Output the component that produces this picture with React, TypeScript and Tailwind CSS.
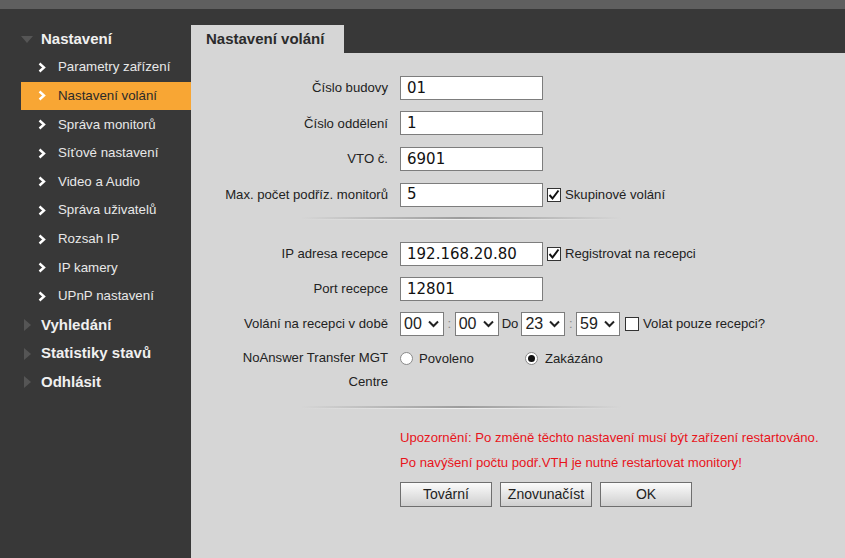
import React from 'react';

const font = { fontFamily: '"Liberation Sans", Arial, sans-serif' };

function Chevron() {
  return (
    <svg width="8" height="11" viewBox="0 0 8 11" className="shrink-0">
      <polyline points="1.5,1.5 6,5.5 1.5,9.5" fill="none" stroke="#ffffff" strokeWidth="2.4" />
    </svg>
  );
}

function Tri({ down }: { down?: boolean }) {
  return down ? (
    <svg width="12" height="9" viewBox="0 0 12 9" className="shrink-0">
      <polygon points="0,1 12,1 6,8" fill="#555555" />
    </svg>
  ) : (
    <svg width="12" height="12" viewBox="0 0 12 12" className="shrink-0">
      <polygon points="2,0 9,6 2,12" fill="#555555" />
    </svg>
  );
}

const items = [
  'Parametry zařízení',
  'Nastavení volání',
  'Správa monitorů',
  'Síťové nastavení',
  'Video a Audio',
  'Správa uživatelů',
  'Rozsah IP',
  'IP kamery',
  'UPnP nastavení',
];

function Sidebar() {
  return (
    <aside className="w-[191px] shrink-0 pt-[16px]">
      <div className="h-[28px] flex items-center pl-[21px] gap-[8px]">
        <Tri down />
        <span className="text-[15px] font-bold text-[#f0f0f0]">Nastavení</span>
      </div>
      {items.map((it) => {
        const active = it === 'Nastavení volání';
        return (
          <div
            key={it}
            className={`h-[28.625px] ml-[21px] flex items-center pl-[17px] gap-[12px] ${
              active ? 'bg-[#f8a634]' : ''
            }`}
          >
            <Chevron />
            <span className={`text-[13.3px] ${active ? 'text-[#2a2a2a]' : 'text-[#e8e8e8]'}`}>{it}</span>
          </div>
        );
      })}
      {['Vyhledání', 'Statistiky stavů', 'Odhlásit'].map((h) => (
        <div key={h} className="h-[28.625px] flex items-center pl-[22px] gap-[7px]">
          <Tri />
          <span className="text-[15px] font-bold text-[#f0f0f0]">{h}</span>
        </div>
      ))}
    </aside>
  );
}

function TextBox({ value }: { value: string }) {
  return (
    <div
      className="w-[143px] h-[24px] bg-white border border-[#7d7d7d] flex items-center pl-[6px] text-[15px] text-[#111]"
      style={{ fontFamily: '"DejaVu Sans", Verdana, sans-serif' }}
    >
      {value}
    </div>
  );
}

function Check({ checked }: { checked?: boolean }) {
  return (
    <div className="w-[14px] h-[14px] bg-white border border-[#333] flex items-center justify-center shrink-0">
      {checked && (
        <svg width="12" height="12" viewBox="0 0 12 12">
          <polyline points="1.5,6 4.5,9.5 10.5,1.5" fill="none" stroke="#111" strokeWidth="2" />
        </svg>
      )}
    </div>
  );
}

function Radio({ checked }: { checked?: boolean }) {
  return (
    <div className="w-[13px] h-[13px] rounded-full bg-white border border-[#8a8a8a] flex items-center justify-center shrink-0">
      {checked && <div className="w-[7px] h-[7px] rounded-full bg-[#111]" />}
    </div>
  );
}

function Sel({ value }: { value: string }) {
  return (
    <div className="w-[44px] h-[24px] bg-white border border-[#7d7d7d] flex items-center justify-between pl-[3px] pr-[4px] text-[16px] text-[#222]">
      <span>{value}</span>
      <svg width="11" height="8" viewBox="0 0 11 8">
        <polyline points="1,1.5 5.5,6 10,1.5" fill="none" stroke="#222" strokeWidth="2" />
      </svg>
    </div>
  );
}

function Row({ label, children, h = 'h-[35.6px]' }: { label: React.ReactNode; children?: React.ReactNode; h?: string }) {
  return (
    <div className={`${h} flex items-center`}>
      <div className="w-[167px] ml-[30px] text-right text-[13.15px] text-[#222]">{label}</div>
      <div className="ml-[12px] flex items-center">{children}</div>
    </div>
  );
}

function Separator() {
  return (
    <div className="ml-[110px] w-[320px]">
      <div className="h-[2px] bg-gradient-to-r from-transparent via-[#9c9c9c] to-transparent" />
      <div className="h-[1px] bg-gradient-to-r from-transparent via-[#eeeeee] to-transparent" />
    </div>
  );
}

function Btn({ children }: { children: React.ReactNode }) {
  return (
    <div className="w-[92px] h-[25px] border border-[#6f6f6f] bg-gradient-to-b from-[#fbfbfb] to-[#cfcfcf] flex items-center justify-center text-[14px] text-[#222]">
      {children}
    </div>
  );
}

export default function App() {
  return (
    <div className="w-[845px] h-[558px] bg-[#383838] flex flex-col overflow-hidden" style={font}>
      <div className="h-[9px] bg-[#5f5f5f] shrink-0" />
      <div className="flex flex-1 min-h-0">
        <Sidebar />
        <main className="flex-1 flex flex-col pt-[16px]">
          <div className="h-[28px] flex">
            <div className="w-[153px] bg-[#d6d6d6] flex items-center pl-[15px] text-[15px] font-bold text-[#2b2b2b]">
              Nastavení volání
            </div>
          </div>
          <div className="flex-1 bg-[#d6d6d6] pt-[17px]">
            <Row label="Číslo budovy"><TextBox value="01" /></Row>
            <Row label="Číslo oddělení"><TextBox value="1" /></Row>
            <Row label="VTO č."><TextBox value="6901" /></Row>
            <Row label="Max. počet podříz. monitorů">
              <TextBox value="5" />
              <div className="ml-[4px]"><Check checked /></div>
              <span className="ml-[4px] text-[13.15px] text-[#222]">Skupinové volání</span>
            </Row>
            <div className="h-[5px]" />
            <Separator />
            <div className="h-[16px]" />
            <Row label="IP adresa recepce" h="h-[35px]">
              <TextBox value="192.168.20.80" />
              <div className="ml-[4px]"><Check checked /></div>
              <span className="ml-[4px] text-[13.15px] text-[#222]">Registrovat na recepci</span>
            </Row>
            <Row label="Port recepce" h="h-[35px]"><TextBox value="12801" /></Row>
            <Row label="Volání na recepci v době" h="h-[35px]">
              <Sel value="00" />
              <span className="mx-[3.5px] text-[13px] text-[#888]">:</span>
              <Sel value="00" />
              <span className="mx-[3px] text-[13.15px] text-[#222]">Do</span>
              <Sel value="23" />
              <span className="mx-[3.5px] text-[13px] text-[#888]">:</span>
              <Sel value="59" />
              <div className="ml-[5px]"><Check /></div>
              <span className="ml-[4px] text-[13.15px] text-[#222]">Volat pouze recepci?</span>
            </Row>
            <div className="flex items-start pt-[5px]">
              <div className="w-[167px] ml-[30px] text-right text-[13.15px] text-[#222] leading-[24px]">
                NoAnswer Transfer MGT
                <br />
                Centre
              </div>
              <div className="ml-[12px] h-[24px] flex items-center">
                <Radio />
                <span className="ml-[6px] text-[13.15px] text-[#222] w-[106px]">Povoleno</span>
                <Radio checked />
                <span className="ml-[7px] text-[13.15px] text-[#222]">Zakázáno</span>
              </div>
            </div>
            <div className="h-[12px]" />
            <Separator />
            <div className="ml-[209px] mt-[16px] text-[13.15px] text-[#e8141b] leading-[25px]">
              <div>Upozornění: Po změně těchto nastavení musí být zařízení restartováno.</div>
              <div>Po navýšení počtu podř.VTH je nutné restartovat monitory!</div>
            </div>
            <div className="ml-[209px] mt-[7px] flex gap-[8px]">
              <Btn>Tovární</Btn>
              <Btn>Znovunačíst</Btn>
              <Btn>OK</Btn>
            </div>
          </div>
        </main>
      </div>
    </div>
  );
}
